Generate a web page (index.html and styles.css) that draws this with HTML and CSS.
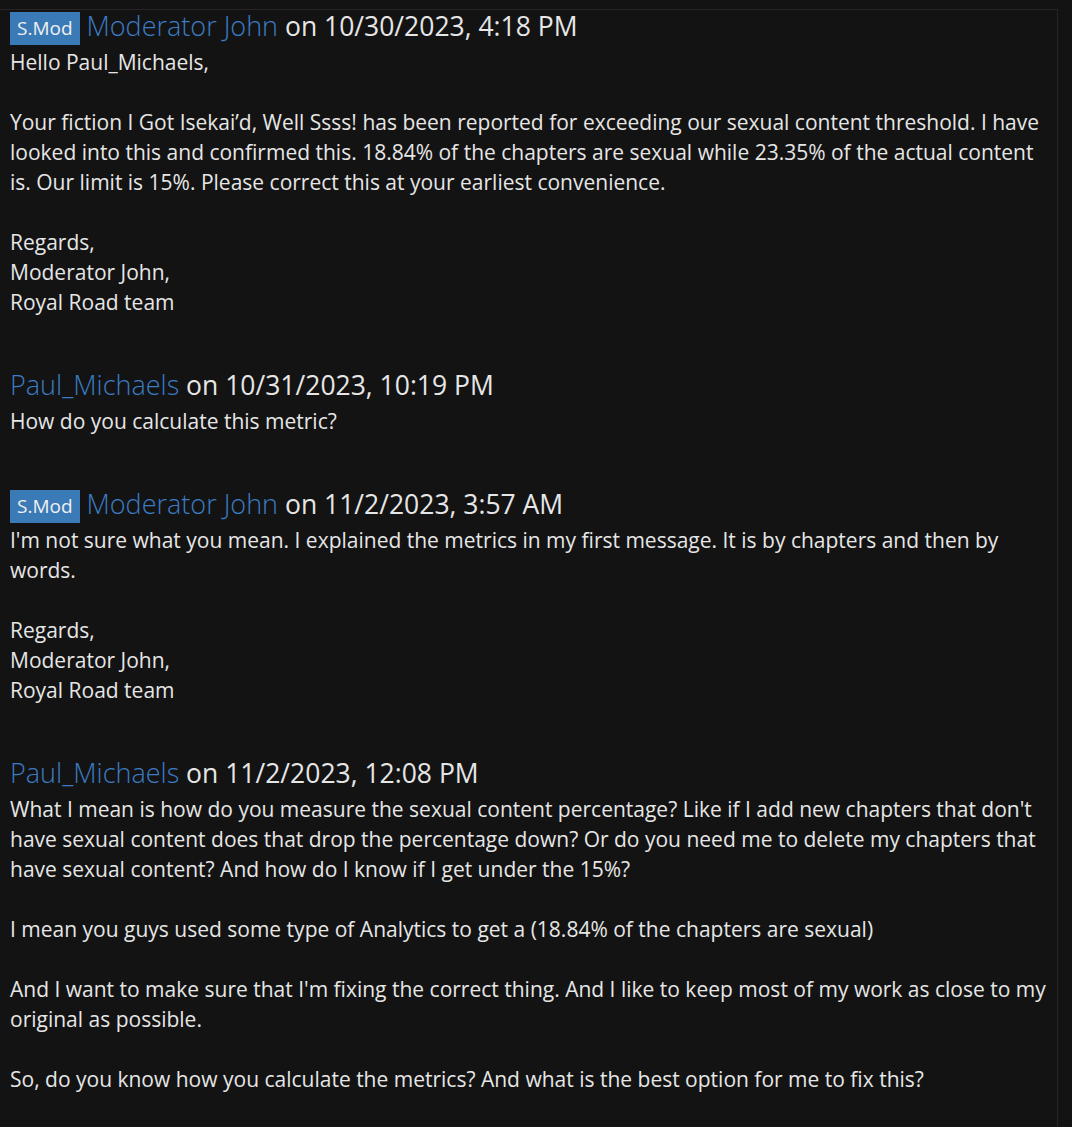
FILE: index.html
```html
<!DOCTYPE html>
<html>
<head>
<meta charset="utf-8">
<link rel="stylesheet" href="styles.css">
</head>
<body>
<div class="panel">
  <div class="msg">
    <div class="head"><span class="badge">S.Mod</span> <span class="name">Moderator John</span> on 10/30/2023, 4:18 PM</div>
    <div class="body">
      <p>Hello Paul_Michaels,</p>
      <p>Your fiction I Got Isekai’d, Well Ssss! has been reported for exceeding our sexual content threshold. I have looked into this and confirmed this. 18.84% of the chapters are sexual while 23.35% of the actual content is. Our limit is 15%. Please correct this at your earliest convenience.</p>
      <p>Regards,<br>Moderator John,<br>Royal Road team</p>
    </div>
  </div>
  <div class="msg">
    <div class="head"><span class="name">Paul_Michaels</span> on 10/31/2023, 10:19 PM</div>
    <div class="body">
      <p>How do you calculate this metric?</p>
    </div>
  </div>
  <div class="msg">
    <div class="head"><span class="badge">S.Mod</span> <span class="name">Moderator John</span> on 11/2/2023, 3:57 AM</div>
    <div class="body">
      <p>I'm not sure what you mean. I explained the metrics in my first message. It is by chapters and then by words.</p>
      <p>Regards,<br>Moderator John,<br>Royal Road team</p>
    </div>
  </div>
  <div class="msg">
    <div class="head"><span class="name">Paul_Michaels</span> on 11/2/2023, 12:08 PM</div>
    <div class="body">
      <p>What I mean is how do you measure the sexual content percentage? Like if I add new chapters that don't have sexual content does that drop the percentage down? Or do you need me to delete my chapters that have sexual content? And how do I know if I get under the 15%?</p>
      <p>I mean you guys used some type of Analytics to get a (18.84% of the chapters are sexual)</p>
      <p>And I want to make sure that I'm fixing the correct thing. And I like to keep most of my work as close to my original as possible.</p>
      <p>So, do you know how you calculate the metrics? And what is the best option for me to fix this?</p>
    </div>
  </div>
</div>
</body>
</html>
```
FILE: styles.css
```css
html, body {
  margin: 0;
  padding: 0;
  background: #131313;
  height: 100%;
  overflow: hidden;
}
body {
  font-family: "Open Sans", "Noto Sans", sans-serif;
  color: #e6e6e6;
}
.panel {
  margin: 9px 0 0 -20px;
  width: 1078px;
  min-height: 1200px;
  box-sizing: border-box;
  border: 1px solid #262626;
  background: #131313;
  padding: 0 10px 0 29px;
}
.msg {
  margin-bottom: 52px;
}
.head {
  font-size: 26.5px;
  line-height: 32px;
  height: 32px;
  color: #e6e6e6;
  white-space: nowrap;
}
.badge {
  display: inline-block;
  background: #3a7ab7;
  color: #f0f0f0;
  font-size: 19px;
  line-height: 33px;
  padding: 0 7px;
  vertical-align: 1px;
  font-weight: 400;
}
.name {
  color: #3b7cc4;
  font-weight: 300;
  font-size: 27px;
}
.body {
  font-size: 21px;
  line-height: 30px;
  margin-top: 5px;
}
.body p {
  margin: 0 0 30px 0;
}
.body p:last-child {
  margin-bottom: 0;
}
```
